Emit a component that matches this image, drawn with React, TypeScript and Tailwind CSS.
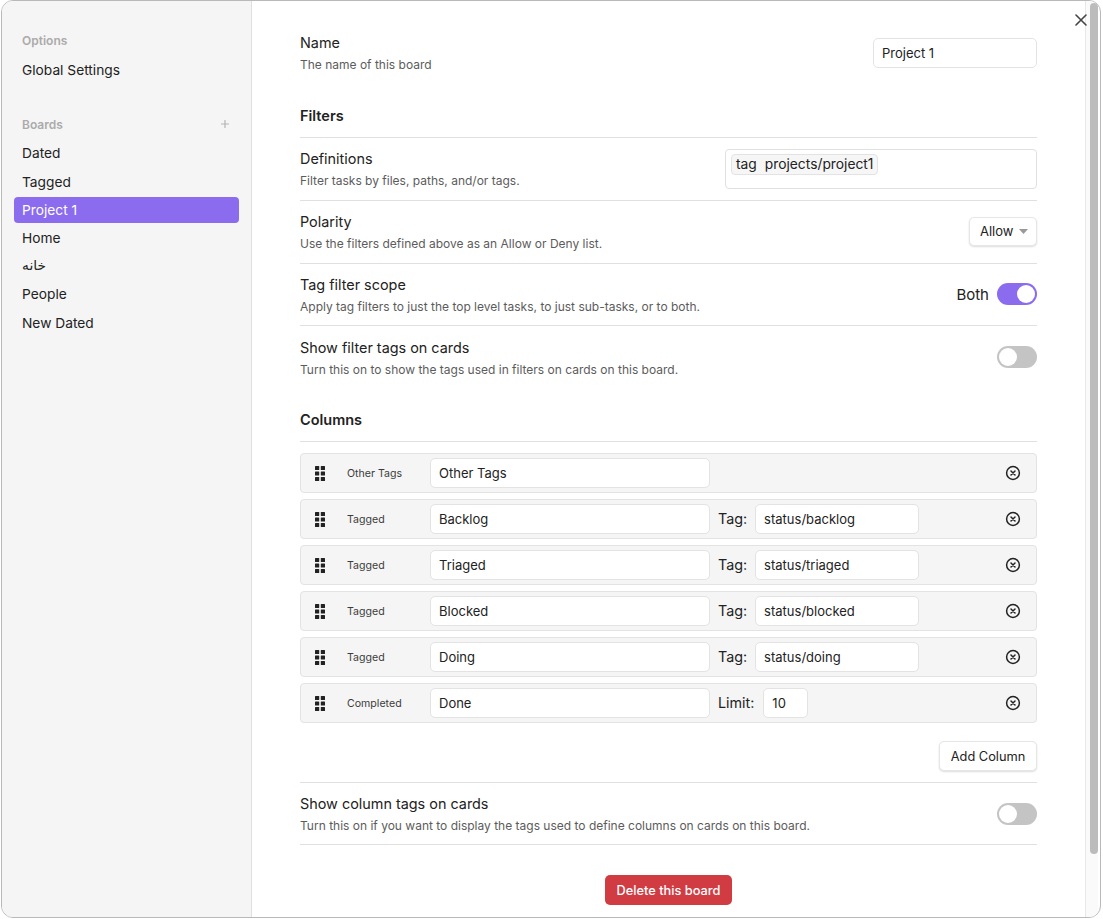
import React from "react";

function SideItem({ label, active }: { label: string; active?: boolean }) {
  return (
    <div className={active ? "h-[26px] rounded-[4px] bg-[#8b6cef] px-2 text-[13.75px] leading-[26px] text-white" : "h-[26px] px-2 text-[13.75px] leading-[26px] text-[#222222]"}>
      {label}
    </div>
  );
}

function Toggle({ on }: { on?: boolean }) {
  return (
    <div className={on ? "flex h-[22px] w-[40px] items-center justify-end rounded-full bg-[#8b6cef] px-[2px]" : "flex h-[22px] w-[40px] items-center justify-start rounded-full bg-[#c4c4c4] px-[2px]"}>
      <div className="h-[18px] w-[18px] rounded-full bg-white" />
    </div>
  );
}

function Setting({ name, desc, children, h, border = true }: { name: string; desc: string; children?: React.ReactNode; h: string; border?: boolean }) {
  return (
    <div className={`flex items-center justify-between ${h} ${border ? "border-b border-[#e0e0e0]" : ""}`}>
      <div>
        <div className="text-[14.4px] leading-[20px] text-[#222222]">{name}</div>
        <div className="mt-[3px] text-[12px] leading-[17px] text-[#5c5c5c]">{desc}</div>
      </div>
      {children}
    </div>
  );
}

function Heading({ children }: { children: React.ReactNode }) {
  return <div className="flex h-[32px] items-start border-b border-[#e0e0e0] text-[14.5px] font-semibold leading-[20px] text-[#222222]">{children}</div>;
}

function Grip() {
  return (
    <svg width="10" height="15" viewBox="0 0 10 15" fill="#222222" className="shrink-0">
      <rect x="0" y="0" width="4.2" height="4" rx="0.5" />
      <rect x="5.8" y="0" width="4.2" height="4" rx="0.5" />
      <rect x="0" y="5.5" width="4.2" height="4" rx="0.5" />
      <rect x="5.8" y="5.5" width="4.2" height="4" rx="0.5" />
      <rect x="0" y="11" width="4.2" height="4" rx="0.5" />
      <rect x="5.8" y="11" width="4.2" height="4" rx="0.5" />
    </svg>
  );
}

function CircleX() {
  return (
    <svg width="16" height="16" viewBox="0 0 16 16" fill="none" stroke="#222222" strokeWidth="1.5" strokeLinecap="round" className="shrink-0">
      <circle cx="8" cy="8" r="6.4" />
      <path d="M6 6l4 4M10 6l-4 4" />
    </svg>
  );
}

type Col = { kind: string; title: string; label?: string; value?: string };
const cols: Col[] = [
  { kind: "Other Tags", title: "Other Tags" },
  { kind: "Tagged", title: "Backlog", label: "Tag:", value: "status/backlog" },
  { kind: "Tagged", title: "Triaged", label: "Tag:", value: "status/triaged" },
  { kind: "Tagged", title: "Blocked", label: "Tag:", value: "status/blocked" },
  { kind: "Tagged", title: "Doing", label: "Tag:", value: "status/doing" },
  { kind: "Completed", title: "Done", label: "Limit:", value: "10" },
];

function Field({ value, w }: { value: string; w: string }) {
  return <div className={`flex h-[30px] ${w} shrink-0 items-center rounded-[5px] border border-[#e3e3e3] bg-white px-2 pt-[2px] text-[13px] text-[#222222]`}>{value}</div>;
}

export default function App() {
  return (
    <div className="h-[919px] w-[1103px] overflow-hidden bg-white font-['Inter',sans-serif]">
      <div className="relative ml-[1px] flex h-[918px] w-[1100px] overflow-hidden rounded-[12px] border border-[#b9b9b9] bg-white">
        <aside className="h-full w-[250px] shrink-0 border-r border-[#e0e0e0] bg-[#f5f5f5] pl-[12px] pr-[12px] pt-[31px]">
          <div className="h-[18px] px-2 text-[12px] font-semibold leading-[18px] text-[#ababab]">Options</div>
          <div className="mt-[7px]"><SideItem label="Global Settings" /></div>
          <div className="mt-[33px] flex h-[18px] items-center justify-between px-2 text-[12px] font-semibold leading-[18px] text-[#ababab]">
            <span>Boards</span>
            <svg width="8" height="8" viewBox="0 0 8 8" stroke="#b5b5b5" strokeWidth="1.2" className="mb-[2px] mr-[2px]"><path d="M4 0v8M0 4h8" /></svg>
          </div>
          <div className="mt-[6.4px] flex flex-col gap-[2.2px]">
            <SideItem label="Dated" />
            <SideItem label="Tagged" />
            <SideItem label="Project 1" active />
            <SideItem label="Home" />
            <div className="h-[26px] px-2 font-['DejaVu_Sans',sans-serif] text-[13.8px] leading-[25px] text-[#222222]">خانه</div>
            <SideItem label="People" />
            <div className="pt-[0.6px]"><SideItem label="New Dated" /></div>
          </div>
        </aside>

        <main className="min-w-0 flex-1 pl-[48px] pt-[32px]">
          <div className="w-[737px]">
            <Setting name="Name" desc="The name of this board" h="h-[40px]" border={false}>
              <Field value="Project 1" w="w-[164px]" />
            </Setting>

            <div className="mt-[33px]"><Heading>Filters</Heading></div>

            <div className="flex h-[63px] items-center justify-between border-b border-[#e0e0e0]">
              <div>
                <div className="text-[14.4px] leading-[20px] text-[#222222]">Definitions</div>
                <div className="mt-[3px] text-[12px] leading-[17px] text-[#5c5c5c]">Filter tasks by files, paths, and/or tags.</div>
              </div>
              <div className="flex h-[40px] w-[312px] items-start rounded-[4px] border border-[#e0e0e0] px-[5px] pt-[4px]">
                <div className="flex h-[21px] items-center gap-[8px] rounded-[4px] border border-[#e3e3e3] bg-[#f6f6f6] px-[4px] pb-[1px] text-[13.8px] text-[#222222]">
                  <span>tag</span><span>projects/project1</span>
                </div>
              </div>
            </div>

            <Setting name="Polarity" desc="Use the filters defined above as an Allow or Deny list." h="h-[63px]">
              <div className="mb-[1px] flex h-[29px] w-[68px] items-center justify-between rounded-[5px] border border-[#e6e6e6] bg-white pl-[10px] pr-[8px] text-[13px] text-[#222222] shadow-[0_1px_2px_rgba(0,0,0,0.14)]">
                <span className="pt-[1px]">Allow</span>
                <svg width="9" height="5" viewBox="0 0 9 5" fill="#999999"><path d="M0 0h9L4.5 5z" /></svg>
              </div>
            </Setting>

            <Setting name="Tag filter scope" desc="Apply tag filters to just the top level tasks, to just sub-tasks, or to both." h="h-[62px]">
              <div className="mb-[1px] flex items-center gap-[8px] text-[15px] text-[#222222]">
                <span className="pt-[2px]">Both</span>
                <Toggle on />
              </div>
            </Setting>

            <Setting name="Show filter tags on cards" desc="Turn this on to show the tags used in filters on cards on this board." h="h-[63px]" border={false}>
              <div className="mb-[1px]"><Toggle /></div>
            </Setting>

            <div className="mt-[21px]"><Heading>Columns</Heading></div>

            <div className="mt-[11px] flex flex-col gap-[6px]">
              {cols.map((c) => (
                <div key={c.title} className="flex h-[40px] items-center rounded-[4px] border border-[#e3e3e3] bg-[#f5f5f5] pl-[14px] pr-[15px]">
                  <Grip />
                  <div className="ml-[22px] w-[83px] shrink-0 pt-[2px] text-[10.6px] text-[#3c3c3c]">{c.kind}</div>
                  <Field value={c.title} w="w-[280px]" />
                  {c.label && <span className="ml-[8px] text-[14.3px] text-[#222222]">{c.label}</span>}
                  {c.value && <div className={c.label === "Limit:" ? "ml-[9px]" : "ml-[8px]"}><Field value={c.value} w={c.label === "Limit:" ? "w-[45px]" : "w-[164px]"} /></div>}
                  <div className="ml-auto"><CircleX /></div>
                </div>
              ))}
            </div>

            <div className="mt-[18px] flex justify-end">
              <div className="flex h-[30px] w-[98px] items-center justify-center rounded-[5px] border border-[#e6e6e6] bg-white pt-[1px] text-[12.8px] text-[#222222] shadow-[0_1px_2px_rgba(0,0,0,0.14)]">Add Column</div>
            </div>

            <div className="mt-[11px] border-t border-[#e0e0e0]">
              <Setting name="Show column tags on cards" desc="Turn this on if you want to display the tags used to define columns on cards on this board." h="h-[62px]">
                <Toggle />
              </Setting>
            </div>

            <div className="mt-[30px] flex justify-center">
              <div className="flex h-[30px] w-[127px] items-center justify-center rounded-[5px] bg-[#d03c42] pt-[1px] text-[12.8px] font-medium text-white">Delete this board</div>
            </div>
          </div>
        </main>

        <div className="absolute right-[2px] top-0 h-full w-[13px] border-l border-[#e8e8e8] bg-[#fafafa]" />
        <div className="absolute right-[2px] top-[2px] h-[851px] w-[8px] rounded-full bg-[#bcbcbc]" />
        <svg width="12" height="12" viewBox="0 0 12 12" stroke="#444444" strokeWidth="1.6" strokeLinecap="round" className="absolute right-[13px] top-[13px]">
          <path d="M1 1l10 10M11 1L1 11" />
        </svg>
      </div>
    </div>
  );
}
